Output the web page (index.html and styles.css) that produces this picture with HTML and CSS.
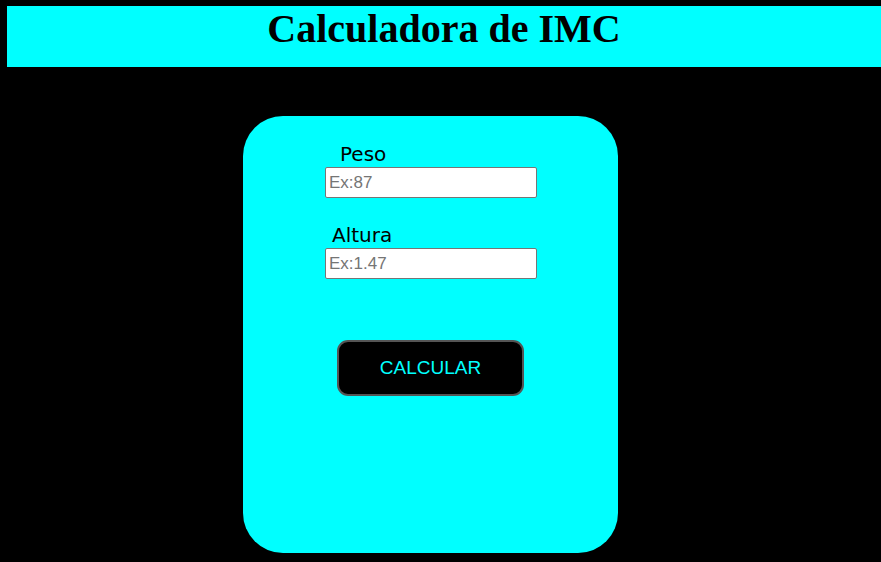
FILE: index.html
```html
<!DOCTYPE html>
<html lang="pt">
<head>
<meta charset="utf-8">
<title>Calculadora de IMC</title>
<link rel="stylesheet" href="styles.css">
</head>
<body>
<header class="topbar">
  <h1 class="title">Calculadora de IMC</h1>
</header>
<main class="stage">
  <form class="card">
    <div class="field field-peso">
      <label class="label" for="peso">Peso</label>
      <input class="input" id="peso" type="text" placeholder="Ex:87">
    </div>
    <div class="field field-altura">
      <label class="label" for="altura">Altura</label>
      <input class="input" id="altura" type="text" placeholder="Ex:1.47">
    </div>
    <button class="btn" type="button">CALCULAR</button>
  </form>
</main>
</body>
</html>
```
FILE: styles.css
```css
html, body {
  margin: 0;
  padding: 0;
  background: #000;
  overflow: hidden;
}
.topbar {
  margin: 6px 0 0 7px;
  height: 61px;
  background: #00ffff;
  display: flex;
  justify-content: center;
}
.title {
  margin: 0;
  font-family: "Liberation Serif", serif;
  font-weight: bold;
  font-size: 40px;
  line-height: 46px;
  color: #000;
}
.stage {
  display: flex;
  padding: 49px 0 0 243px;
}
.card {
  width: 375px;
  height: 437px;
  background: #00ffff;
  border-radius: 40px;
  box-sizing: border-box;
  display: flex;
  flex-direction: column;
  padding: 26px 0 0 82px;
}
.field {
  display: flex;
  flex-direction: column;
  align-items: flex-start;
}
.field-altura {
  margin-top: 25px;
}
.label {
  font-family: "DejaVu Sans", sans-serif;
  font-size: 20px;
  line-height: 25px;
  color: #000;
}
.field-peso .label { margin-left: 15px; }
.field-altura .label { margin-left: 7px; }
.input {
  width: 212px;
  height: 31px;
  box-sizing: border-box;
  border: 1px solid #767676;
  border-radius: 2px;
  padding: 1px 3px;
  font-family: "Liberation Sans", sans-serif;
  font-size: 17px;
  background: #fff;
}
.input::placeholder { color: #757575; }
.btn {
  margin: 61px 0 0 12px;
  width: 187px;
  height: 56px;
  background: #000;
  color: #00ffff;
  border: 2px solid #555;
  border-radius: 11px;
  font-family: "Liberation Sans", sans-serif;
  font-size: 19px;
}
```
